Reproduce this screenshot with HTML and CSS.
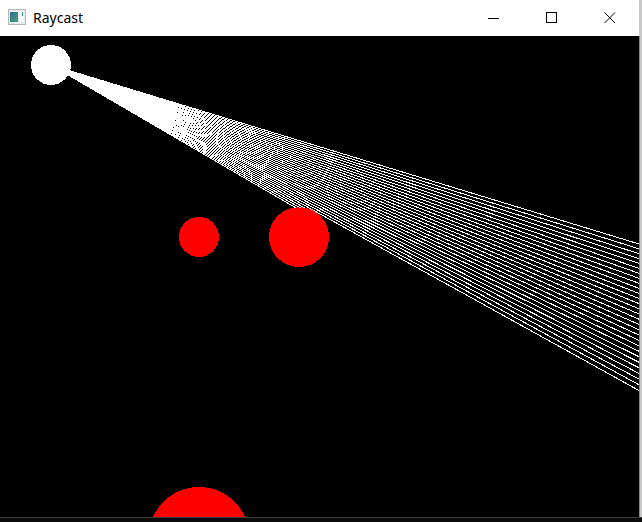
FILE: index.html
```html
<!DOCTYPE html>
<html>
<head>
<meta charset="utf-8">
<link rel="stylesheet" href="styles.css">
</head>
<body>
<div class="window">
  <div class="titlebar">
    <svg class="app-icon" width="18" height="16" viewBox="0 0 18 16">
      <defs>
        <linearGradient id="g" x1="0" y1="0" x2="1" y2="1">
          <stop offset="0" stop-color="#2f6f98"/>
          <stop offset="1" stop-color="#47a078"/>
        </linearGradient>
      </defs>
      <rect x="0.5" y="0.5" width="17" height="15" fill="#e9ecec" stroke="#b4b8b8"/>
      <rect x="2" y="3" width="8" height="10" fill="url(#g)"/>
      <rect x="11" y="3" width="5" height="10" fill="#f7f9f9"/>
      <rect x="14" y="3" width="1" height="4" fill="#3b8f8a"/>
    </svg>
    <span class="title">Raycast</span>
    <div class="controls">
      <div class="ctl">
        <svg width="12" height="12" viewBox="0 0 12 12"><line x1="0" y1="6.5" x2="11" y2="6.5" stroke="#000" stroke-width="1"/></svg>
      </div>
      <div class="ctl">
        <svg width="12" height="12" viewBox="0 0 12 12"><rect x="0.5" y="0.5" width="10" height="10" fill="none" stroke="#000" stroke-width="1"/></svg>
      </div>
      <div class="ctl">
        <svg width="12" height="12" viewBox="0 0 12 12"><path d="M0.5 0.5 L11 11 M11 0.5 L0.5 11" stroke="#000" stroke-width="1" fill="none"/></svg>
      </div>
    </div>
  </div>
  <div class="body-row">
    <svg id="canvas" class="canvas" viewBox="0 36 639 481" width="639" height="481" shape-rendering="crispEdges">
      <circle cx="199" cy="237" r="20" fill="#ff0000"/>
      <circle cx="299" cy="237" r="30" fill="#ff0000"/>
      <circle cx="199" cy="537" r="50" fill="#ff0000"/>
      <g id="rays" stroke="#ffffff" stroke-width="1"></g>
      <circle cx="51" cy="65" r="20" fill="#ffffff"/>
    </svg>
    <div class="rborder"></div>
  </div>
  <div class="bottom"></div>
</div>
<script src="script.js"></script>
</body>
</html>
```
FILE: styles.css
```css
html, body {
  margin: 0;
  padding: 0;
  background: #000;
}
.window {
  width: 642px;
  height: 522px;
  display: flex;
  flex-direction: column;
  overflow: hidden;
  background: #000;
}
.titlebar {
  height: 36px;
  flex: none;
  background: #fff;
  display: flex;
  align-items: center;
  border-right: 3px solid #c9c9c9;
  box-sizing: border-box;
}
.app-icon {
  margin-left: 8px;
  margin-top: -2px;
}
.title {
  margin-left: 7px;
  font-family: "Noto Sans", "Open Sans", sans-serif;
  font-size: 14px;
  color: #000;
  margin-top: -1px;
}
.controls {
  margin-left: auto;
  display: flex;
  height: 100%;
}
.ctl {
  width: 58px;
  display: flex;
  align-items: center;
  justify-content: center;
}
.ctl svg {
  margin-top: -1px;
}
.body-row {
  display: flex;
  height: 481px;
  flex: none;
}
.canvas {
  display: block;
  background: #000;
  flex: none;
}
.rborder {
  width: 3px;
  background: #c9c9c9;
  border-left: 1px solid #8a8a8a;
  box-sizing: border-box;
}
.bottom {
  flex: 1;
  background: #0b0b0b;
  border-top: 1px solid #3c3c3c;
}
```
FILE: script.js
```js
(function () {
  var g = document.getElementById('rays');
  var ns = 'http://www.w3.org/2000/svg';
  var ox = 51, oy = 65;
  var cx = 299, cy = 237, r = 30;
  var a0 = 16.93, a1 = 30.4, step = 0.43;
  for (var a = a0; a <= a1 + 1e-6; a += step) {
    var t = a * Math.PI / 180;
    var dx = Math.cos(t), dy = Math.sin(t);
    var fx = ox - cx, fy = oy - cy;
    var b = fx * dx + fy * dy;
    var c = fx * fx + fy * fy - r * r;
    var disc = b * b - c;
    var len = 1000;
    if (disc >= 0) {
      var s = -b - Math.sqrt(disc);
      if (s > 0) len = s + 2;
    }
    var l = document.createElementNS(ns, 'line');
    l.setAttribute('x1', ox);
    l.setAttribute('y1', oy);
    l.setAttribute('x2', (ox + dx * len).toFixed(2));
    l.setAttribute('y2', (oy + dy * len).toFixed(2));
    g.appendChild(l);
  }
})();
```
